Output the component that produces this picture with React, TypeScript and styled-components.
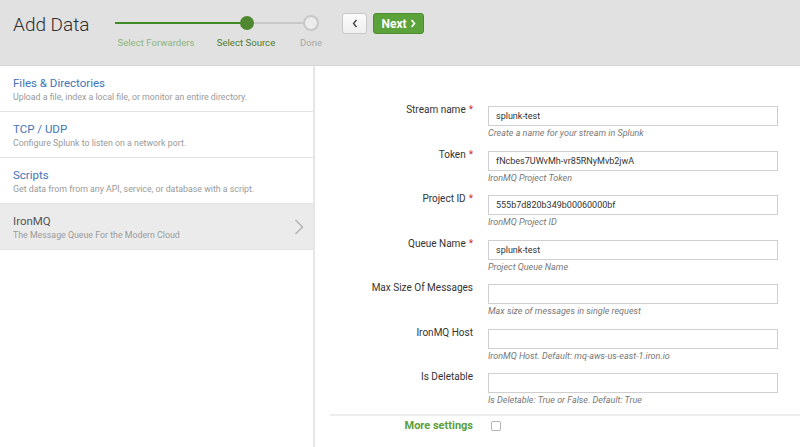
import React from "react";
import styled, { createGlobalStyle } from "styled-components";

const Global = createGlobalStyle`
  html, body { margin: 0; padding: 0; background: #fff; }
  body { font-family: Roboto, "Liberation Sans", Arial, sans-serif; color: #333; }
  * { box-sizing: border-box; }
`;

const Page = styled.div`
  width: 800px;
  height: 447px;
  display: flex;
  flex-direction: column;
  overflow: hidden;
`;

const Header = styled.header`
  height: 66px;
  flex: none;
  background: #e1e1e1;
  border-bottom: 1px solid #d6d6d6;
  display: flex;
  align-items: flex-start;
  padding: 13px 0 0 13px;
`;

const Title = styled.h1`
  margin: 0 26px 0 0;
  font-size: 19px;
  line-height: 24px;
  font-weight: 300;
  color: #2e2e2e;
  width: 76px;
  white-space: nowrap;
`;

const Stepper = styled.div`
  width: 212px;
  display: flex;
  flex-direction: column;
`;

const StepLabels = styled.div`
  display: flex;
  margin-top: 4px;
`;

const StepLabel = styled.span<{ $w: number; $color: string }>`
  width: ${(p) => p.$w}px;
  text-align: center;
  font-size: 9.6px;
  line-height: 12px;
  color: ${(p) => p.$color};
  white-space: nowrap;
`;

const Buttons = styled.div`
  display: flex;
  gap: 6px;
  margin-left: 15px;
`;

const BackButton = styled.button`
  width: 25px;
  height: 21px;
  padding: 0;
  border: 1px solid #c8c8c8;
  border-radius: 3px;
  background: linear-gradient(#fbfbfb, #f0f0f0);
  display: flex;
  align-items: center;
  justify-content: center;
`;

const NextButton = styled.button`
  width: 51px;
  height: 21px;
  padding: 0;
  border: 1px solid #4d8d2d;
  border-radius: 3px;
  background: #5ba23a;
  color: #fff;
  font-family: Roboto, "Liberation Sans", Arial, sans-serif;
  font-weight: 700;
  font-size: 12px;
  display: flex;
  align-items: center;
  justify-content: center;
  gap: 3px;
`;

const Body = styled.div`
  flex: 1;
  display: flex;
`;

const Sidebar = styled.nav`
  width: 315px;
  flex: none;
  border-right: 2px solid #e6e6e6;
`;

const Item = styled.div<{ $active?: boolean }>`
  position: relative;
  padding: 9px 13px 8px;
  border-bottom: 1px solid #e4e4e4;
  background: ${(p) => (p.$active ? "#ebebeb" : "#fff")};
`;

const ItemTitle = styled.div<{ $active?: boolean }>`
  font-size: 11.5px;
  line-height: 16px;
  color: ${(p) => (p.$active ? "#555" : "#4474b6")};
`;

const ItemDesc = styled.div`
  font-size: 8.8px;
  line-height: 12px;
  color: #9a9a9a;
`;

const Chevron = styled.svg`
  position: absolute;
  right: 9px;
  top: 15px;
`;

const Main = styled.main`
  flex: 1;
  padding: 40px 0 0 15px;
`;

const Row = styled.div`
  display: grid;
  grid-template-columns: 143px 290px;
  column-gap: 15px;
  margin-bottom: 10.5px;
`;

const Label = styled.label`
  text-align: right;
  font-size: 10px;
  line-height: 12px;
  margin-top: -2px;
  color: #333;
  white-space: nowrap;
`;

const Req = styled.span`
  color: #c8323a;
  margin-left: 3px;
`;

const Field = styled.div`
  display: flex;
  flex-direction: column;
`;

const Input = styled.input`
  height: 20px;
  width: 290px;
  border: 1px solid #cfcfcf;
  background: #fff;
  padding: 0 7px;
  font-family: Roboto, "Liberation Sans", Arial, sans-serif;
  font-size: 9px;
  color: #333;
  outline: none;
`;

const Help = styled.div`
  font-size: 9px;
  line-height: 14px;
  font-style: italic;
  color: #777;
`;

const Divider = styled.div`
  border-top: 2px solid #ededed;
  margin-top: -3.5px;
`;

const MoreRow = styled.div`
  display: grid;
  grid-template-columns: 143px 290px;
  column-gap: 15px;
  padding-top: 2px;
  align-items: center;
`;

const MoreLabel = styled.span`
  text-align: right;
  font-size: 11px;
  font-weight: 700;
  color: #5b9e3a;
  line-height: 16px;
`;

const Check = styled.span`
  width: 10px;
  height: 10px;
  margin-left: 3px;
  border: 1px solid #b5b5b5;
  border-radius: 2px;
  background: #fff;
`;

const sources = [
  { title: "Files & Directories", desc: "Upload a file, index a local file, or monitor an entire directory." },
  { title: "TCP / UDP", desc: "Configure Splunk to listen on a network port." },
  { title: "Scripts", desc: "Get data from from any API, service, or database with a script." },
  { title: "IronMQ", desc: "The Message Queue For the Modern Cloud", active: true },
];

const fields = [
  { label: "Stream name", req: true, value: "splunk-test", help: "Create a name for your stream in Splunk" },
  { label: "Token", req: true, value: "fNcbes7UWvMh-vr85RNyMvb2jwA", help: "IronMQ Project Token" },
  { label: "Project ID", req: true, value: "555b7d820b349b00060000bf", help: "IronMQ Project ID" },
  { label: "Queue Name", req: true, value: "splunk-test", help: "Project Queue Name" },
  { label: "Max Size Of Messages", value: "", help: "Max size of messages in single request" },
  { label: "IronMQ Host", value: "", help: "IronMQ Host. Default: mq-aws-us-east-1.iron.io" },
  { label: "Is Deletable", value: "", help: "Is Deletable: True or False. Default: True" },
];

export default function App() {
  return (
    <Page>
      <Global />
      <Header>
        <Title>Add Data</Title>
        <Stepper>
          <svg width="212" height="20" viewBox="0 0 212 20">
            <line x1="0" y1="10" x2="132" y2="10" stroke="#3f8a25" strokeWidth="2" />
            <line x1="132" y1="10" x2="196" y2="10" stroke="#c8c8c8" strokeWidth="2" />
            <circle cx="132" cy="10" r="7" fill="#4e8730" />
            <circle cx="196" cy="10" r="7" fill="#ececec" stroke="#c8c8c8" strokeWidth="2" />
          </svg>
          <StepLabels>
            <StepLabel $w={82} $color="#8db57a">Select Forwarders</StepLabel>
            <StepLabel $w={98} $color="#4d7d31">Select Source</StepLabel>
            <StepLabel $w={32} $color="#a8a8a8">Done</StepLabel>
          </StepLabels>
        </Stepper>
        <Buttons>
          <BackButton aria-label="Back">
            <svg width="6" height="9" viewBox="0 0 6 9">
              <path d="M4.5 1 L1.5 4.5 L4.5 8" fill="none" stroke="#333" strokeWidth="1.2" />
            </svg>
          </BackButton>
          <NextButton>
            Next
            <svg width="6" height="9" viewBox="0 0 6 9">
              <path d="M1.5 1 L4.5 4.5 L1.5 8" fill="none" stroke="#fff" strokeWidth="1.6" />
            </svg>
          </NextButton>
        </Buttons>
      </Header>
      <Body>
        <Sidebar>
          {sources.map((s) => (
            <Item key={s.title} $active={s.active}>
              <ItemTitle $active={s.active}>{s.title}</ItemTitle>
              <ItemDesc>{s.desc}</ItemDesc>
              {s.active && (
                <Chevron width="10" height="16" viewBox="0 0 10 16">
                  <path d="M1.5 1 L8.5 8 L1.5 15" fill="none" stroke="#b5b5b5" strokeWidth="1.6" />
                </Chevron>
              )}
            </Item>
          ))}
        </Sidebar>
        <Main>
          {fields.map((f) => (
            <Row key={f.label}>
              <Label>
                {f.label}
                {f.req && <Req>*</Req>}
              </Label>
              <Field>
                <Input defaultValue={f.value} />
                <Help>{f.help}</Help>
              </Field>
            </Row>
          ))}
          <Divider />
          <MoreRow>
            <MoreLabel>More settings</MoreLabel>
            <Check />
          </MoreRow>
        </Main>
      </Body>
    </Page>
  );
}
